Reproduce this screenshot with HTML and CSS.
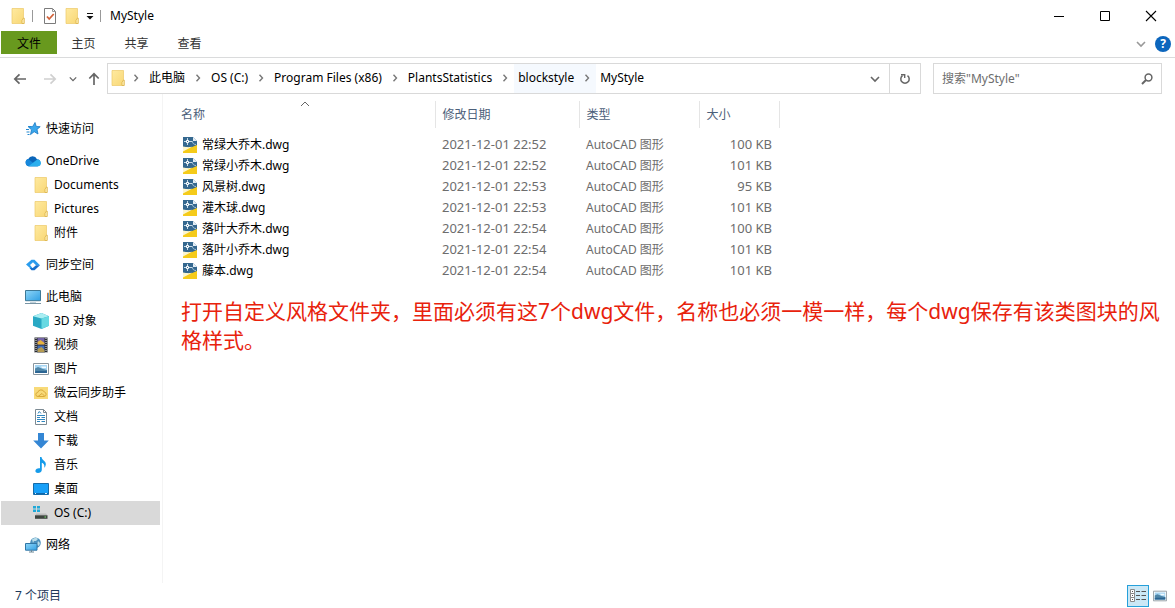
FILE: index.html
```html
<!DOCTYPE html>
<html lang="zh-CN">
<head>
<meta charset="utf-8">
<meta name="viewport" content="width=device-width, initial-scale=1">
<title>MyStyle</title>
<link rel="stylesheet" href="styles.css">
</head>
<body>
<svg class="sprite" aria-hidden="true">
  <linearGradient id="gold" x1="0" y1="0" x2="1" y2="1"><stop offset="0" stop-color="#ffeaa0"/><stop offset="1" stop-color="#f8d775"/></linearGradient>
  <linearGradient id="blue" x1="0" y1="0" x2="1" y2="1"><stop offset="0" stop-color="#8fd6f8"/><stop offset="1" stop-color="#2f9fe3"/></linearGradient>
  <symbol id="folder" viewBox="0 0 16 16"><path d="M2 .5h11.500v10H14v5H2z" fill="url(#gold)" stroke="#ecc967" stroke-width=".7"/><path d="M12 15.500v-3.200l1.500-2.300h.7v5.500z" fill="#fff0b5" stroke="#d9ad3f" stroke-width=".7"/></symbol>
  <symbol id="check-page" viewBox="0 0 16 16"><path d="M2.500.5h8l3 3v12h-11z" fill="#fff" stroke="#7b7b7b"/><path d="M10.500.5v3h3" fill="none" stroke="#9a9a9a"/><path d="M5 8.500l2.200 2.500 4.500-5" fill="none" stroke="#d2623a" stroke-width="1.800"/></symbol>
  <symbol id="star" viewBox="0 0 16 16"><path d="M10 1.500l1.200 3.900 4 .3-3.200 2.700 1 4.600-3.800-2.300-3.700 2.900 1-4.800L3.500 6l4.300-.6z" fill="#3ba7ec" stroke="#1879c4" stroke-width=".8"/><path d="M1 8.500h3M1.500 11h3M2.500 13.500h2M3 5.500h3" stroke="#2589d0"/></symbol>
  <symbol id="onedrive" viewBox="0 0 16 16"><path d="M4 13.200a3.700 3.700 0 0 1-.8-7.200A4.900 4.900 0 0 1 12 6.200a3.600 3.600 0 0 1 1 7z" fill="#0a65b9"/><path d="M3.200 6l8.500 6.800 1.300.4H4A3.700 3.700 0 0 1 3.200 6z" fill="#1688dc"/><path d="M3.500 13.200L11.500 7c2-1.500 4.500 1 4.400 3.200a3.200 3.200 0 0 1-3 3z" fill="#2cafee"/></symbol>
  <symbol id="sync" viewBox="0 0 16 16"><path d="M1 7.500L6.500 2.800h3L15 8.200h-4L8 5.200 5 8l2.500 3H5z" fill="#2a9ced"/><path d="M15 8.200L9.500 13.300h-3L4.500 11h3.300L11 8.200z" fill="#176fcc"/></symbol>
  <symbol id="pc" viewBox="0 0 16 16"><path d="M.5 1.500h15v10.200H.5z" fill="url(#blue)" stroke="#3d7896"/><path d="M0 14.500h16" stroke="#7894a4"/><path d="M5 13.500h6" stroke="#c1d1da"/></symbol>
  <symbol id="cube" viewBox="0 0 16 16"><path d="M0 3.300L8.500 0 16 3.300v9.500L8.500 16 0 12.800z" fill="#29a9c4"/><path d="M0 3.300L8.500 0 16 3.300 8.500 5.500z" fill="#a9eef2"/><path d="M8.500 5.500L16 3.300v9.500L8.500 16z" fill="#67d9e2"/></symbol>
  <symbol id="film" viewBox="0 0 16 16"><path d="M1.500.5h13v15h-13z" fill="#292b30"/><path d="M4.500 1h7v6.500h-7z" fill="#7565a8"/><path d="M4.500 5l3-2 4 3v1.500h-7z" fill="#e6b43d"/><path d="M4.500 8.500h7V15h-7z" fill="#416eba"/><path d="M4.500 12l4-2 3 3v2h-7z" fill="#b59b52"/><path d="M3 1v15M13 1v15" stroke="#f4f4f4" stroke-width="1" stroke-dasharray="1 1"/></symbol>
  <symbol id="picture" viewBox="0 0 16 16"><path d="M.5 2.500h15v11H.5z" fill="#fff" stroke="#8a969e"/><path d="M2 4h12v8H2z" fill="#a6d5f3"/><path d="M2 7.500l3-1.500 5 2 4 1v3H2z" fill="#4f86a8"/><path d="M2 10.500c4-1.500 7 .5 12-1V12H2z" fill="#2b6593"/><path d="M8 5.500h5v1.500H9z" fill="#f3fbff"/></symbol>
  <symbol id="cloud-box" viewBox="0 0 16 16"><path d="M1 2h14v12H1z" fill="#f8da78"/><path d="M5 11.500a2 2 0 0 1-.3-4 3.500 3.500 0 0 1 6.600-.5 2.300 2.300 0 0 1 0 4.500zl4-3 2.500 2.500" fill="none" stroke="#d9a93a"/></symbol>
  <symbol id="document" viewBox="0 0 16 16"><path d="M2.500.5h8l3 3v12h-11z" fill="#fff" stroke="#7c8a93"/><path d="M10.500.5v3h3" fill="none" stroke="#7c8a93"/><path d="M4 6.500h8M4 8.500h3M8.500 8.500H12M4 10.500h8M4 12.500h3M8.500 12.500H12" stroke="#2f86bf"/><path d="M5 4.500l1.300-2L8 4.500" fill="none" stroke="#2f86bf"/></symbol>
  <symbol id="download" viewBox="0 0 16 16"><path d="M5 0h6v7.500h4.800L8 15.500.2 7.500H5z" fill="#3486d4"/></symbol>
  <symbol id="music" viewBox="0 0 16 16"><path d="M7 0h1.500c.5 3.500 4.700 3.800 4.300 7.500-.2 1.500-.8 2.500-1.500 3.300.6-3-1-4.500-2.500-5V13c0 2-2 3-3.800 3S2 15 2.500 13.300C3 11.500 5.300 10.800 7 11.300z" fill="#159bea"/></symbol>
  <symbol id="desktop" viewBox="0 0 16 16"><path d="M.5 2.500h15v11H.5z" fill="#18a0f8" stroke="#166ba8"/><path d="M1 12.500h14" stroke="#0c68ad"/><path d="M2 12.500h1M12 12.500h2" stroke="#e0f4ff"/></symbol>
  <symbol id="drive" viewBox="0 0 16 16"><path d="M0 1h3v2.500H0zM4 1h3v2.500H4zM0 4.500h3V7H0zM4 4.500h3V7H4z" fill="#20a9d8"/><path d="M3.500 8.500h9.500l1.500 2H2z" fill="#bcbcbc"/><path d="M2 10.300h12.500v3.500H2z" fill="#3f4540"/><path d="M11.500 12h1.500" stroke="#78ed71"/></symbol>
  <symbol id="network" viewBox="0 0 16 16"><circle cx="10.500" cy="5.700" r="5.300" fill="#4b91bd"/><path d="M7 2.500c2-2 5-2 6-.5l-2 2H9l-1 2zM13 4l2 2-1 3-2-1z" fill="#b8dce9"/><path d="M.5 6.500H12v6.700H.5z" fill="url(#blue)" stroke="#3076a5"/><path d="M4 15h5M6.500 13v2" stroke="#6d8796"/></symbol>
  <symbol id="dwg" viewBox="0 0 14 16"><path d="M0 0h10l4 4v12H0z" fill="#35688f"/><path d="M0 10c5 1 9 .5 14-2v8H0z" fill="#f5cb1a"/><path d="M0 9.500c4 .8 6 .8 9 .2L0 14.500z" fill="#fbf5d0"/><path d="M10 0l4 4h-4z" fill="#e4eef5"/><path d="M1 4.500h2M6 4.500h3.500M4.500 1v2M4.500 6v2" fill="none" stroke="#c9dce9"/><path d="M3.500 3.500h2v2h-2z" fill="none" stroke="#fff"/><path d="M9.500 4.500c0 2 1.500 3 3.500 3" fill="none" stroke="#a9c6da"/></symbol>
  <symbol id="chev-r" viewBox="0 0 8 8"><path d="M2.500.8L5.500 4l-3 3.200" fill="none" stroke="#777" stroke-width="1.400"/></symbol>
  <symbol id="chev-d" viewBox="0 0 10 10"><path d="M1 3l4 4 4-4" fill="none" stroke="currentColor" stroke-width="1.600"/></symbol>
  <symbol id="arrow" viewBox="0 0 14 14"><path d="M13 7H2M6.500 2.300L1.800 7l4.700 4.700" fill="none" stroke="currentColor" stroke-width="1.700"/></symbol>
</svg>

<div class="window">
  <header class="titlebar">
    <svg class="icon"><use href="#folder"/></svg>
    <span class="divider"></span>
    <button class="plain" aria-label="属性"><svg class="icon"><use href="#check-page"/></svg></button>
    <button class="plain" aria-label="新建文件夹"><svg class="icon"><use href="#folder"/></svg></button>
    <button class="plain customize" aria-label="自定义快速访问工具栏"><svg viewBox="0 0 8 8"><path d="M1 1.500h6" stroke="#111"/><path d="M.5 4h7L4 7.500z" fill="#111"/></svg></button>
    <span class="divider"></span>
    <h1>MyStyle</h1>
    <div class="controls">
      <button class="plain" aria-label="最小化"><svg viewBox="0 0 12 12"><path d="M1 6.500h10" stroke="#000"/></svg></button>
      <button class="plain" aria-label="最大化"><svg viewBox="0 0 12 12"><path d="M1.500 1.500h9v9h-9z" fill="none" stroke="#000"/></svg></button>
      <button class="plain" aria-label="关闭"><svg viewBox="0 0 12 12"><path d="M1 1l10 10M11 1L1 11" stroke="#000" stroke-width="1.100"/></svg></button>
    </div>
  </header>

  <div class="ribbon">
    <button class="tab file">文件</button>
    <button class="tab">主页</button>
    <button class="tab">共享</button>
    <button class="tab">查看</button>
    <div class="ribbon-end">
      <button class="plain expand" aria-label="展开功能区"><svg class="chev"><use href="#chev-d"/></svg></button>
      <button class="plain help" aria-label="帮助">?</button>
    </div>
  </div>

  <div class="toolbar">
    <div class="history">
      <button class="plain back" aria-label="后退"><svg class="arrow"><use href="#arrow"/></svg></button>
      <button class="plain forward" aria-label="前进"><svg class="arrow"><use href="#arrow"/></svg></button>
      <button class="plain recent" aria-label="最近浏览的位置"><svg><use href="#chev-d"/></svg></button>
      <button class="plain up" aria-label="上移"><svg class="arrow"><use href="#arrow"/></svg></button>
    </div>
    <div class="address">
      <nav class="crumbs" aria-label="地址">
        <svg class="icon"><use href="#folder"/></svg>
        <svg class="sep"><use href="#chev-r"/></svg><a href="#">此电脑</a>
        <svg class="sep"><use href="#chev-r"/></svg><a href="#">OS (C:)</a>
        <svg class="sep"><use href="#chev-r"/></svg><a href="#">Program Files (x86)</a>
        <svg class="sep"><use href="#chev-r"/></svg><a href="#">PlantsStatistics</a>
        <svg class="sep"><use href="#chev-r"/></svg><span class="hovered"><a href="#">blockstyle</a><svg class="sep"><use href="#chev-r"/></svg></span><a href="#">MyStyle</a>
      </nav>
      <button class="plain drop" aria-label="以前的位置"><svg class="chev"><use href="#chev-d"/></svg></button>
      <button class="plain refresh" aria-label="刷新"><svg viewBox="0 0 12 12"><path d="M8.500 2.600A4.200 4.200 0 1 1 3.500 2.600" fill="none" stroke="#666" stroke-width="1.500"/><path d="M2 1.700h3.700V5" fill="none" stroke="#666" stroke-width="1.400"/></svg></button>
    </div>
    <form class="search">
      <input type="search" aria-label="搜索" placeholder='搜索"MyStyle"'>
      <button class="plain" type="button" aria-label="开始搜索"><svg viewBox="0 0 12 12"><circle cx="7.500" cy="4.500" r="3.400" fill="none" stroke="#666" stroke-width="1.500"/><path d="M5 7L1 11" stroke="#666" stroke-width="1.900"/></svg></button>
    </form>
  </div>

  <div class="body">
    <nav class="sidebar" aria-label="导航窗格">
      <ul>
        <li><a href="#"><svg class="icon"><use href="#star"/></svg>快速访问</a></li>
      </ul>
      <ul>
        <li><a href="#"><svg class="icon"><use href="#onedrive"/></svg>OneDrive</a></li>
        <li><a class="child" href="#"><svg class="icon"><use href="#folder"/></svg>Documents</a></li>
        <li><a class="child" href="#"><svg class="icon"><use href="#folder"/></svg>Pictures</a></li>
        <li><a class="child" href="#"><svg class="icon"><use href="#folder"/></svg>附件</a></li>
      </ul>
      <ul>
        <li><a href="#"><svg class="icon"><use href="#sync"/></svg>同步空间</a></li>
      </ul>
      <ul>
        <li><a href="#"><svg class="icon"><use href="#pc"/></svg>此电脑</a></li>
        <li><a class="child" href="#"><svg class="icon"><use href="#cube"/></svg>3D 对象</a></li>
        <li><a class="child" href="#"><svg class="icon"><use href="#film"/></svg>视频</a></li>
        <li><a class="child" href="#"><svg class="icon"><use href="#picture"/></svg>图片</a></li>
        <li><a class="child" href="#"><svg class="icon"><use href="#cloud-box"/></svg>微云同步助手</a></li>
        <li><a class="child" href="#"><svg class="icon"><use href="#document"/></svg>文档</a></li>
        <li><a class="child" href="#"><svg class="icon"><use href="#download"/></svg>下载</a></li>
        <li><a class="child" href="#"><svg class="icon"><use href="#music"/></svg>音乐</a></li>
        <li><a class="child" href="#"><svg class="icon"><use href="#desktop"/></svg>桌面</a></li>
        <li><a class="child current" href="#"><svg class="icon"><use href="#drive"/></svg>OS (C:)</a></li>
      </ul>
      <ul>
        <li><a href="#"><svg class="icon"><use href="#network"/></svg>网络</a></li>
      </ul>
    </nav>

    <main class="content">
      <table class="files">
        <colgroup><col class="c-name"><col class="c-date"><col class="c-type"><col class="c-size"></colgroup>
        <thead>
          <tr><th scope="col" aria-sort="ascending">名称<svg class="sort" viewBox="0 0 10 6"><path d="M1 5l4-4 4 4" fill="none" stroke="#666"/></svg></th><th scope="col">修改日期</th><th scope="col">类型</th><th scope="col">大小</th></tr>
        </thead>
        <tbody>
          <tr><td><a href="#"><svg class="dwg"><use href="#dwg"/></svg>常绿大乔木.dwg</a></td><td class="num">2021-12-01 22:52</td><td>AutoCAD 图形</td><td class="num size">100 KB</td></tr>
          <tr><td><a href="#"><svg class="dwg"><use href="#dwg"/></svg>常绿小乔木.dwg</a></td><td class="num">2021-12-01 22:52</td><td>AutoCAD 图形</td><td class="num size">101 KB</td></tr>
          <tr><td><a href="#"><svg class="dwg"><use href="#dwg"/></svg>风景树.dwg</a></td><td class="num">2021-12-01 22:53</td><td>AutoCAD 图形</td><td class="num size">95 KB</td></tr>
          <tr><td><a href="#"><svg class="dwg"><use href="#dwg"/></svg>灌木球.dwg</a></td><td class="num">2021-12-01 22:53</td><td>AutoCAD 图形</td><td class="num size">101 KB</td></tr>
          <tr><td><a href="#"><svg class="dwg"><use href="#dwg"/></svg>落叶大乔木.dwg</a></td><td class="num">2021-12-01 22:54</td><td>AutoCAD 图形</td><td class="num size">100 KB</td></tr>
          <tr><td><a href="#"><svg class="dwg"><use href="#dwg"/></svg>落叶小乔木.dwg</a></td><td class="num">2021-12-01 22:54</td><td>AutoCAD 图形</td><td class="num size">101 KB</td></tr>
          <tr><td><a href="#"><svg class="dwg"><use href="#dwg"/></svg>藤本.dwg</a></td><td class="num">2021-12-01 22:54</td><td>AutoCAD 图形</td><td class="num size">101 KB</td></tr>
        </tbody>
      </table>
      <p class="note">打开自定义风格文件夹，里面必须有这7个dwg文件，名称也必须一模一样，每个dwg保存有该类图块的风格样式。</p>
    </main>
  </div>

  <footer class="status">
    <span>7 个项目</span>
    <div class="views">
      <button class="plain active" aria-label="详细信息"><svg viewBox="0 0 16 14"><path d="M.5.5h4v4h-4zM.5 4.500h4v4h-4zM.5 8.500h4v4h-4z" fill="#fff" stroke="#8a8a8a"/><path d="M2 2.500h1M2 6.500h1M2 10.500h1M6 2.500h4M11.500 2.500H16M6 6.500h4M11.500 6.500H16M6 10.500h4M11.500 10.500H16" stroke="#555"/></svg></button>
      <button class="plain thumbs" aria-label="大缩略图"><svg viewBox="0 0 16 16"><use href="#picture"/></svg></button>
    </div>
  </footer>
</div>
</body>
</html>
```

FILE: styles.css
```css
* { box-sizing: border-box; }

body {
  margin: 0;
  background: #fff;
  color: #000;
  font: 12px/16px "Noto Sans", "Noto Sans CJK SC", sans-serif;
}

a { color: inherit; text-decoration: none; }
svg { display: block; flex: none; }
button, input { font: inherit; color: inherit; }
.sprite { position: absolute; width: 0; height: 0; }
.icon { width: 16px; height: 16px; }
.chev { width: 10px; height: 10px; }

.plain {
  display: flex;
  align-items: center;
  justify-content: center;
  padding: 0;
  border: 0;
  background: none;
}

.window { display: flex; flex-direction: column; min-height: 100vh; }

/* Title bar */
.titlebar { display: flex; align-items: center; gap: 6px; height: 31px; padding-left: 10px; }
.titlebar h1 { margin: 0; font-size: 12px; font-weight: 400; }
.divider { width: 1px; height: 12px; margin-right: 3px; background: #999; }
.customize svg { width: 8px; height: 8px; }
.controls { display: flex; align-self: stretch; margin-left: auto; padding-right: 1px; }
.controls .plain { width: 46px; }
.controls svg { width: 12px; height: 12px; }

/* Ribbon tabs */
.ribbon { display: flex; height: 27px; padding-left: 1px; border-bottom: 1px solid #dadbdc; }
.tab { height: 23px; width: 53px; padding: 2px 0 0; border: 0; background: none; color: #333; }
.file { width: 56px; background: #68991e; color: #000; }
.ribbon-end { display: flex; align-items: center; gap: 9px; margin-left: auto; padding-right: 4px; }
.expand { color: #999; }
.help { width: 16px; height: 16px; border-radius: 50%; background: #0c66bd; color: #fff; font-weight: 700; }

/* Navigation row */
.toolbar { display: flex; padding: 5px 13px 0 0; color: #666; }
.history { display: flex; align-items: center; width: 107px; padding-left: 13px; }
.arrow { width: 14px; height: 14px; }
.back { margin-right: 16px; }
.forward { margin-right: 12px; color: #d0d0d0; }
.forward svg { transform: rotate(180deg); }
.recent { margin-right: 10px; }
.recent svg { width: 8px; height: 8px; }
.up svg { transform: rotate(90deg); }
.address { display: flex; flex: 1; height: 31px; border: 1px solid #d9d9d9; }
.crumbs { display: flex; flex: 1; align-items: center; padding: 0 0 2px 2px; color: #000; white-space: nowrap; }
.crumbs .icon { margin-right: 6px; }
.sep { width: 8px; height: 8px; margin-right: 9px; }
.crumbs a { margin-right: 9px; }
.hovered { display: flex; align-items: center; align-self: stretch; margin: 0 4px -2px -4px; padding: 0 0 2px 4px; background: #f5f9fe; }
.hovered .sep { margin-right: 5px; }
.drop { width: 28px; }
.refresh { width: 31px; border-left: 1px solid #d9d9d9; }
.refresh svg { width: 12px; height: 12px; }
.search { display: flex; width: 229px; height: 31px; margin-left: 12px; padding: 0 8px; border: 1px solid #d9d9d9; }
.search input { flex: 1; min-width: 0; padding: 0; border: 0; outline: 0; background: none; }
.search input::placeholder { color: #6d6d6d; opacity: 1; }
.search svg { width: 12px; height: 12px; }

/* Body */
.body { display: flex; flex: 1; }
.sidebar { display: flex; flex-direction: column; gap: 8px; width: 163px; padding: 23px 2px 0 1px; border-right: 1px solid #f4f4f4; }
.sidebar ul { margin: 0; padding: 0; list-style: none; }
.sidebar a { display: flex; align-items: center; gap: 5px; height: 24px; padding-left: 24px; }
.sidebar .child { padding-left: 32px; }
.sidebar .current { background: #d9d9d9; }
.content { flex: 1; padding: 7px 8px 0 12px; }

/* File list */
.files { width: 605px; border-collapse: collapse; table-layout: fixed; }
.c-name { width: 261px; }
.c-date { width: 144px; }
.c-type { width: 120px; }
.c-size { width: 80px; }
.files { margin-left: -1px; }
.files th {
  position: relative;
  height: 27px;
  padding: 0 7px;
  border-right: 1px solid #e5e5e5;
  color: #4c607a;
  font-weight: 400;
  text-align: left;
}
.sort { position: absolute; top: 0; left: calc(50% - 4px); width: 10px; height: 6px; }
.files td { height: 21px; padding: 0 7px; color: #6d6d6d; }
.files td:first-child { padding-left: 9px; }
.files td a { display: flex; align-items: center; gap: 5px; color: #000; }
.files tbody::before { content: ""; display: block; height: 6px; }
.files .num { padding-bottom: 2px; font-size: 13px; }
.files .size { text-align: right; }
.dwg { width: 14px; height: 16px; }

.note { margin: 16px 0 0; padding-left: 6px; color: #e8220c; font-size: 21px; line-height: 29px; }

/* Status bar */
.status { display: flex; align-items: center; justify-content: space-between; height: 25px; padding: 0 8px 0 15px; color: #1e395b; }
.views { display: flex; gap: 4px; }
.views .plain svg { width: 16px; height: 14px; }
.views .thumbs svg { width: 14px; height: 14px; }
.views .active { width: 22px; height: 22px; border: 1px solid #26a0da; background: #cbe8f6; }
```
